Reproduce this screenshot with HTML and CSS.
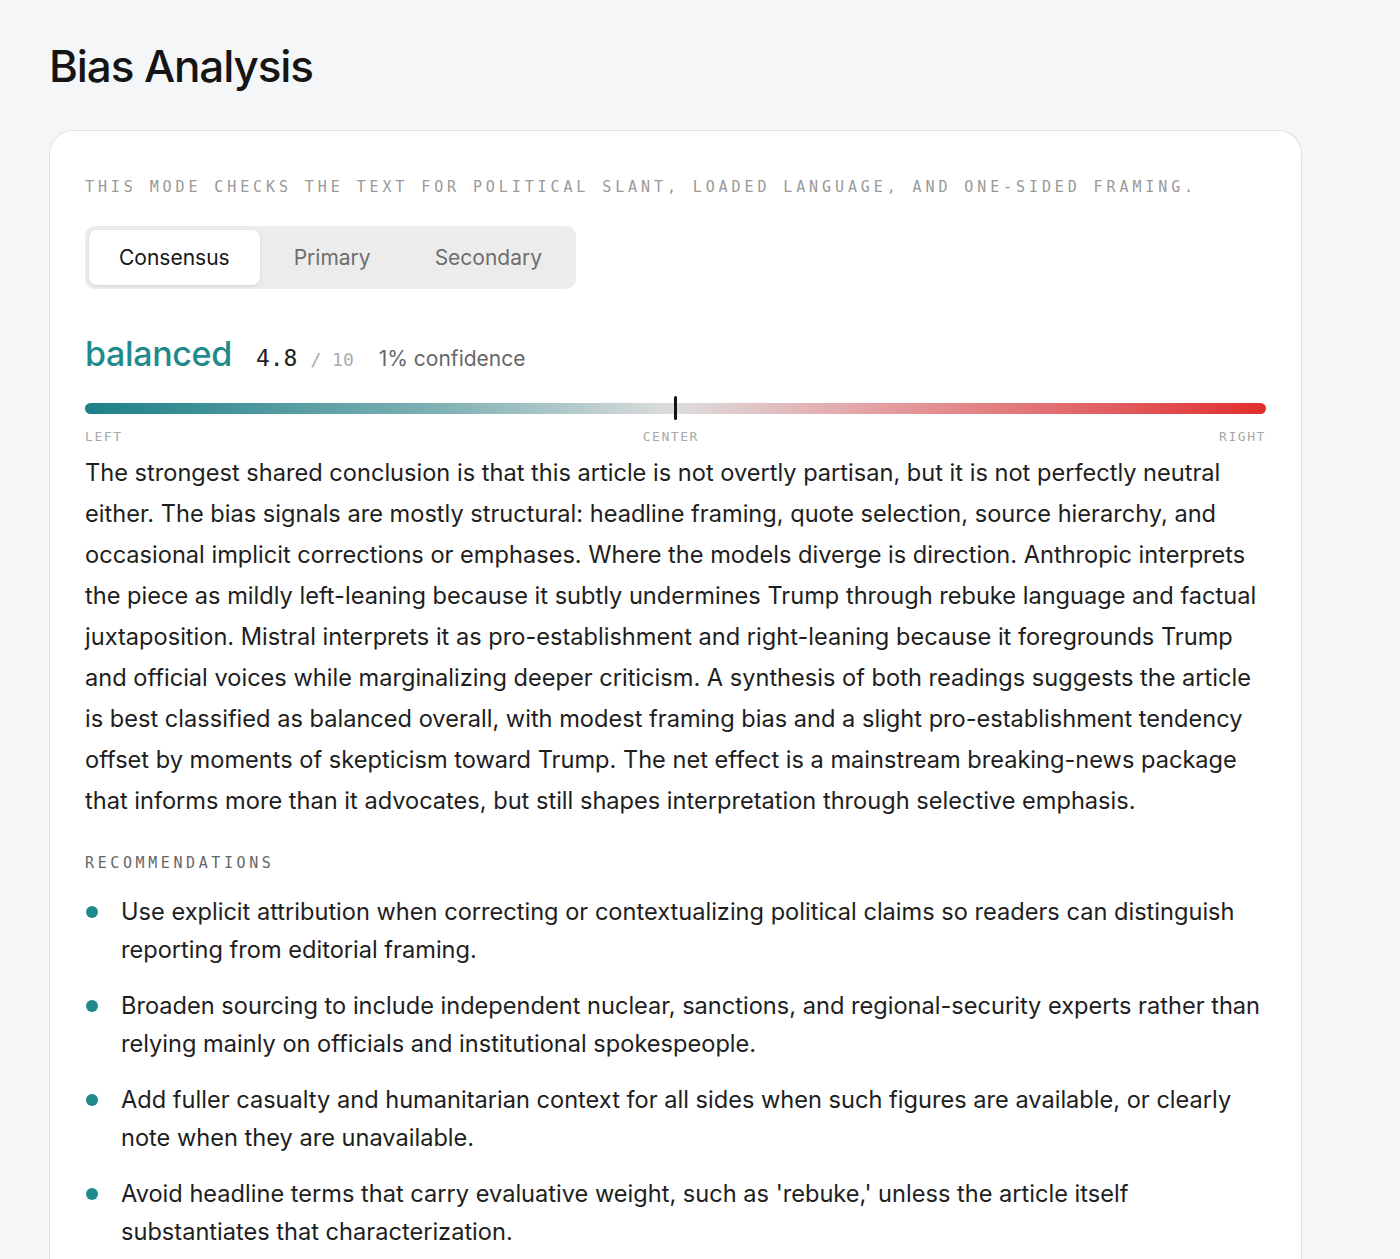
FILE: index.html
```html
<!DOCTYPE html>
<html lang="en">
<head>
    <meta charset="UTF-8">
    <meta name="viewport" content="width=device-width, initial-scale=1.0">
    <title>Bias Analysis</title>
    <link rel="stylesheet" href="styles.css">
</head>
<body>
    <div class="page">
        <h1>Bias Analysis</h1>
        <div class="card">
            <p class="mode-note">This mode checks the text for political slant, loaded language, and one-sided framing.</p>

            <div class="tabs">
                <button class="tab active">Consensus</button>
                <button class="tab">Primary</button>
                <button class="tab">Secondary</button>
            </div>

            <div class="verdict">
                <span class="label">balanced</span>
                <span class="score">4.8</span>
                <span class="scale">/ 10</span>
                <span class="confidence">1% confidence</span>
            </div>

            <div class="meter">
                <div class="track"></div>
                <div class="marker" style="left: 50%"></div>
            </div>
            <div class="meter-labels">
                <span>Left</span>
                <span>Center</span>
                <span>Right</span>
            </div>

            <p class="summary">The strongest shared conclusion is that this article is not overtly partisan, but it is not perfectly neutral either. The bias signals are mostly structural: headline framing, quote selection, source hierarchy, and occasional implicit corrections or emphases. Where the models diverge is direction. Anthropic interprets the piece as mildly left-leaning because it subtly undermines Trump through rebuke language and factual juxtaposition. Mistral interprets it as pro-establishment and right-leaning because it foregrounds Trump and official voices while marginalizing deeper criticism. A synthesis of both readings suggests the article is best classified as balanced overall, with modest framing bias and a slight pro-establishment tendency offset by moments of skepticism toward Trump. The net effect is a mainstream breaking-news package that informs more than it advocates, but still shapes interpretation through selective emphasis.</p>

            <h3 class="section-title">Recommendations</h3>
            <ul class="recs">
                <li>Use explicit attribution when correcting or contextualizing political claims so readers can distinguish reporting from editorial framing.</li>
                <li>Broaden sourcing to include independent nuclear, sanctions, and regional-security experts rather than relying mainly on officials and institutional spokespeople.</li>
                <li>Add fuller casualty and humanitarian context for all sides when such figures are available, or clearly note when they are unavailable.</li>
                <li>Avoid headline terms that carry evaluative weight, such as 'rebuke,' unless the article itself substantiates that characterization.</li>
            </ul>
        </div>
    </div>
</body>
</html>
```

FILE: styles.css
```css
body {
    margin: 0;
    background: #f5f6f7;
    font-family: Inter, "Noto Sans", sans-serif;
    color: #1c1c1c;
}
.page {
    padding: 38px 98px 0 49px;
}
h1 {
    margin: 0 0 36px;
    font-size: 44px;
    font-weight: 500;
    letter-spacing: -0.025em;
    line-height: 56px;
    color: #151515;
}
.card {
    background: #fff;
    border: 1px solid #e2e2e2;
    border-bottom: none;
    border-radius: 24px 24px 0 0;
    padding: 45px 35px 40px;
}
.mode-note {
    margin: 0 0 28px;
    font-family: "DejaVu Sans Mono", monospace;
    font-size: 15px;
    letter-spacing: 0.26em;
    text-transform: uppercase;
    color: #999;
    line-height: 22px;
}
.tabs {
    display: inline-flex;
    gap: 4px;
    padding: 4px;
    background: #ececec;
    border-radius: 10px;
}
.tab {
    font-family: Inter, sans-serif;
    font-size: 21px;
    padding: 14px 30px;
    border: none;
    border-radius: 8px;
    background: transparent;
    color: #6e6e6e;
    line-height: 27px;
}
.tab.active {
    background: #fff;
    color: #161616;
    box-shadow: 0 1px 3px rgba(0, 0, 0, 0.12);
}
.verdict {
    display: flex;
    align-items: baseline;
    margin-top: 44px;
}
.label {
    font-size: 34px;
    font-weight: 500;
    color: #1f8a8c;
    letter-spacing: -0.01em;
    margin-right: 24px;
}
.score {
    font-family: "DejaVu Sans Mono", monospace;
    font-size: 23px;
    color: #222;
    margin-right: 13px;
}
.scale {
    font-family: "DejaVu Sans Mono", monospace;
    font-size: 18px;
    color: #aaa;
    margin-right: 25px;
}
.confidence {
    font-size: 21px;
    color: #666;
}
.meter {
    position: relative;
    margin-top: 22px;
    height: 24px;
}
.track {
    position: absolute;
    left: 0;
    right: 0;
    top: 7px;
    height: 11px;
    border-radius: 6px;
    background: linear-gradient(90deg, #1d8088 0%, #7fb1b4 30%, #dddddd 50%, #e4a3a6 66%, #e05a5c 88%, #e22d2d 100%);
}
.marker {
    position: absolute;
    top: 0;
    width: 3px;
    height: 24px;
    margin-left: -1.5px;
    border-radius: 2px;
    background: #151515;
}
.meter-labels {
    display: flex;
    justify-content: space-between;
    margin-top: 8px;
    font-family: "DejaVu Sans Mono", monospace;
    font-size: 13px;
    letter-spacing: 0.12em;
    text-transform: uppercase;
    color: #a8a8a8;
    line-height: 18px;
}
.summary {
    margin: 6px 0 0;
    font-size: 23.6px;
    line-height: 41px;
    color: #1e1e1e;
}
.section-title {
    margin: 33px 0 21px;
    font-family: "DejaVu Sans Mono", monospace;
    font-size: 15px;
    font-weight: normal;
    letter-spacing: 0.24em;
    text-transform: uppercase;
    color: #666;
}
.recs {
    list-style: none;
    margin: 0;
    padding: 0;
}
.recs li {
    position: relative;
    padding-left: 36px;
    margin-bottom: 18px;
    font-size: 23.6px;
    line-height: 38px;
    color: #1e1e1e;
}
.recs li::before {
    content: "";
    position: absolute;
    left: 1px;
    top: 13px;
    width: 12px;
    height: 12px;
    border-radius: 50%;
    background: #1f8a8c;
}
```
